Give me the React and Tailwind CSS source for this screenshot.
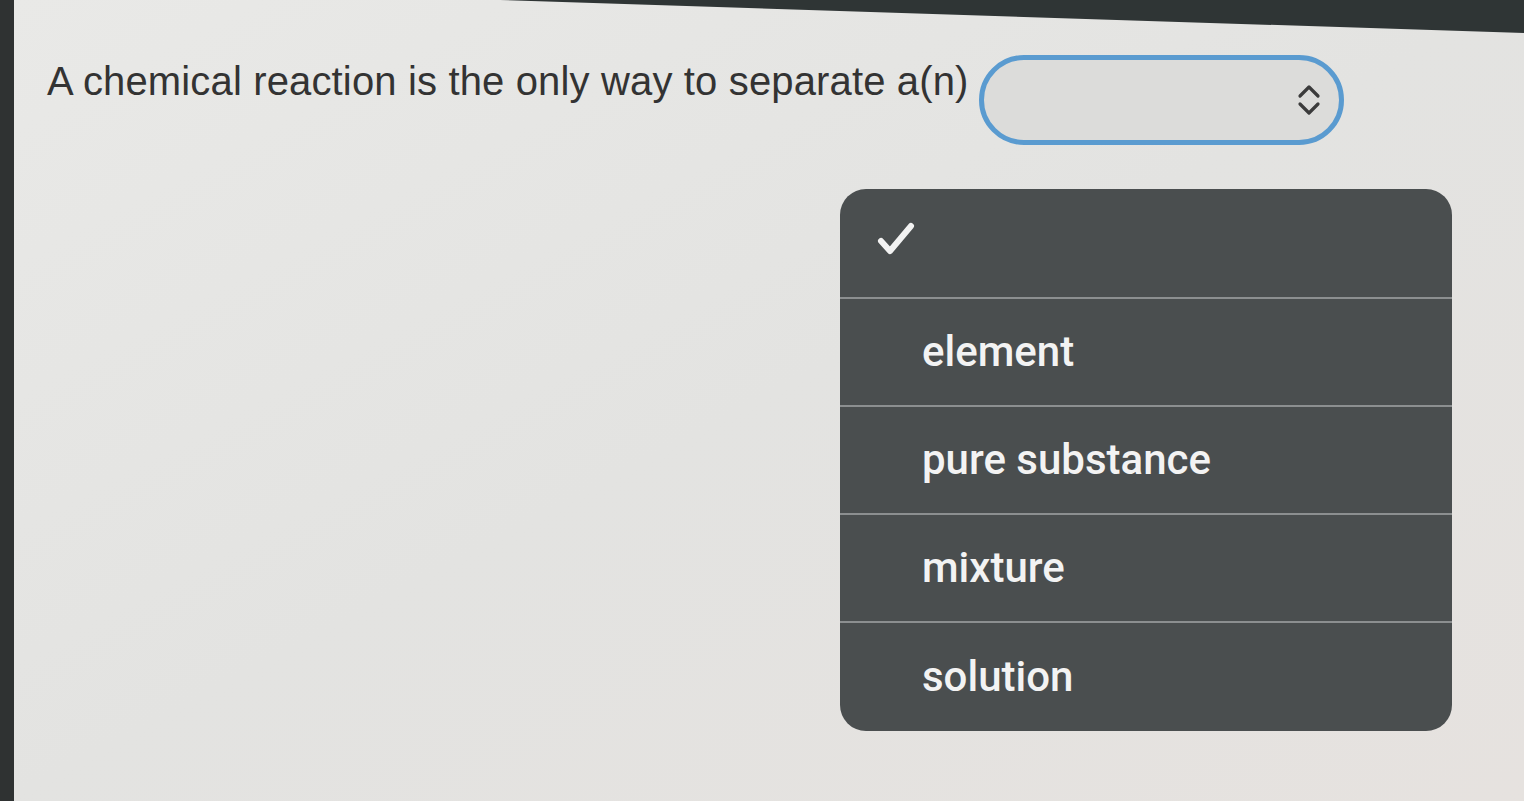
import { useState } from 'react';

const options = ['element', 'pure substance', 'mixture', 'solution'];

function Chevrons() {
  return (
    <svg width="28" height="36" viewBox="0 0 28 36" fill="none" stroke="#3b3b3b" strokeWidth="3.2" strokeLinecap="round" strokeLinejoin="round">
      <path d="M5 14 L14 5 L23 14" />
      <path d="M5 22 L14 31 L23 22" />
    </svg>
  );
}

function Check() {
  return (
    <svg width="40" height="36" viewBox="0 0 40 36" fill="none" stroke="#f2f2f2" strokeWidth="6" strokeLinecap="round" strokeLinejoin="round">
      <path d="M5 20 L14 30 L35 5" />
    </svg>
  );
}

export default function App() {
  const [value, setValue] = useState('');

  return (
    <div className="relative flex h-[801px] w-[1524px] overflow-hidden bg-[#e4e4e2] font-['Liberation_Sans',Arial,sans-serif]">
      <div className="w-[14px] shrink-0 bg-[#2f3232]" />
      <div className="pointer-events-none absolute right-0 top-0 h-[33px] w-[1024px] bg-[#2f3535] [clip-path:polygon(0_0,100%_0,100%_100%)]" />

      <div className="flex flex-1 flex-col bg-gradient-to-br from-[#e9e9e7] via-[#e3e3e1] to-[#e6e2df] pl-[33px] pt-[55px]">
        <div className="flex items-start">
          <span className="mt-[6px] text-[40px] leading-none tracking-[0.15px] text-[#333333]">
            A chemical reaction is the only way to separate a(n)
          </span>
          <button
            type="button"
            className="ml-[10px] flex h-[90px] w-[365px] items-center justify-end rounded-full border-[5px] border-[#5a9bd0] bg-[#dcdcda] pr-[16px]"
          >
            <Chevrons />
          </button>
        </div>

        <div className="ml-[793px] mt-[44px] w-[612px] overflow-hidden rounded-[26px] bg-[#4a4e4f] text-[42px] font-medium leading-none text-[#f3f3f3] font-['Roboto','Liberation_Sans',sans-serif]">
          <div className="flex h-[110px] items-center border-b-2 border-[#8c8f90] pl-[36px] pb-[8px]">
            {value === '' && <Check />}
          </div>
          {options.map((o, i) => (
            <button
              key={o}
              type="button"
              onClick={() => setValue(o)}
              className={`flex h-[108px] w-full items-center pl-[82px] text-left ${i < options.length - 1 ? 'border-b-2 border-[#8c8f90]' : ''}`}
            >
              {o}
            </button>
          ))}
        </div>
      </div>
    </div>
  );
}
